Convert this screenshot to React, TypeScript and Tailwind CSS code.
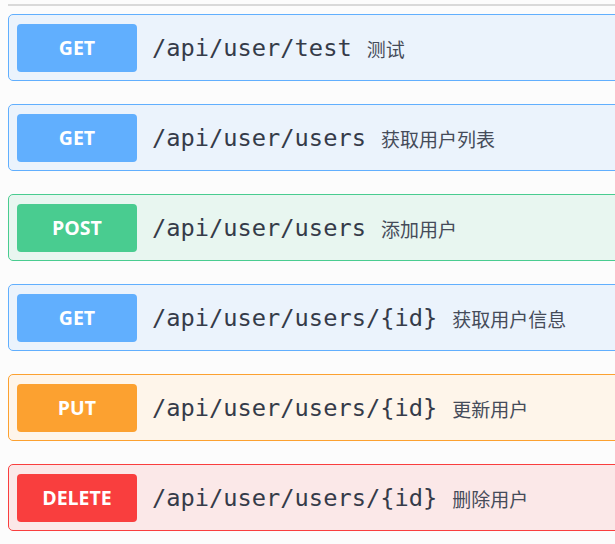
import React from 'react';

type Op = {
  method: string;
  path: string;
  summary: string;
  badge: string;
  card: string;
};

const ops: Op[] = [
  { method: 'GET', path: '/api/user/test', summary: '测试', badge: 'bg-[#61affe]', card: 'bg-[#ebf3fc] border-[#61affe]' },
  { method: 'GET', path: '/api/user/users', summary: '获取用户列表', badge: 'bg-[#61affe]', card: 'bg-[#ebf3fc] border-[#61affe]' },
  { method: 'POST', path: '/api/user/users', summary: '添加用户', badge: 'bg-[#49cc90]', card: 'bg-[#e8f6f0] border-[#49cc90]' },
  { method: 'GET', path: '/api/user/users/{id}', summary: '获取用户信息', badge: 'bg-[#61affe]', card: 'bg-[#ebf3fc] border-[#61affe]' },
  { method: 'PUT', path: '/api/user/users/{id}', summary: '更新用户', badge: 'bg-[#fca130]', card: 'bg-[#fef5ea] border-[#fca130]' },
  { method: 'DELETE', path: '/api/user/users/{id}', summary: '删除用户', badge: 'bg-[#f93e3e]', card: 'bg-[#fbe8e8] border-[#f93e3e]' },
];

export default function App() {
  return (
    <div className="w-[615px] h-[544px] overflow-hidden bg-[#fcfcfc]">
      {/* Tag divider */}
      <div className="ml-2 mt-1 h-[2px] w-[640px] bg-[#d9d9d9]" />

      <div className="ml-2 mt-2 flex w-[640px] flex-col gap-[23px]">
        {ops.map((op, i) => (
          <div
            key={i}
            className={`flex h-[67px] items-center rounded-[5px] border px-2 ${op.card}`}
          >
            <div
              className={`flex h-[48px] w-[120px] shrink-0 items-center justify-center rounded-[4px] pt-[1px] text-[19.5px] font-bold text-white ${op.badge}`}
              style={{ fontFamily: '"Open Sans", sans-serif' }}
            >
              {op.method}
            </div>
            <span
              className="ml-[15px] pt-[3px] text-[23.7px] text-[#353b49]"
              style={{ fontFamily: '"DejaVu Sans Mono", monospace' }}
            >
              {op.path}
            </span>
            <span
              className="ml-[15px] pt-[3px] text-[19px] text-[#454b59]"
              style={{ fontFamily: '"Noto Sans CJK SC", sans-serif' }}
            >
              {op.summary}
            </span>
          </div>
        ))}
      </div>
    </div>
  );
}
